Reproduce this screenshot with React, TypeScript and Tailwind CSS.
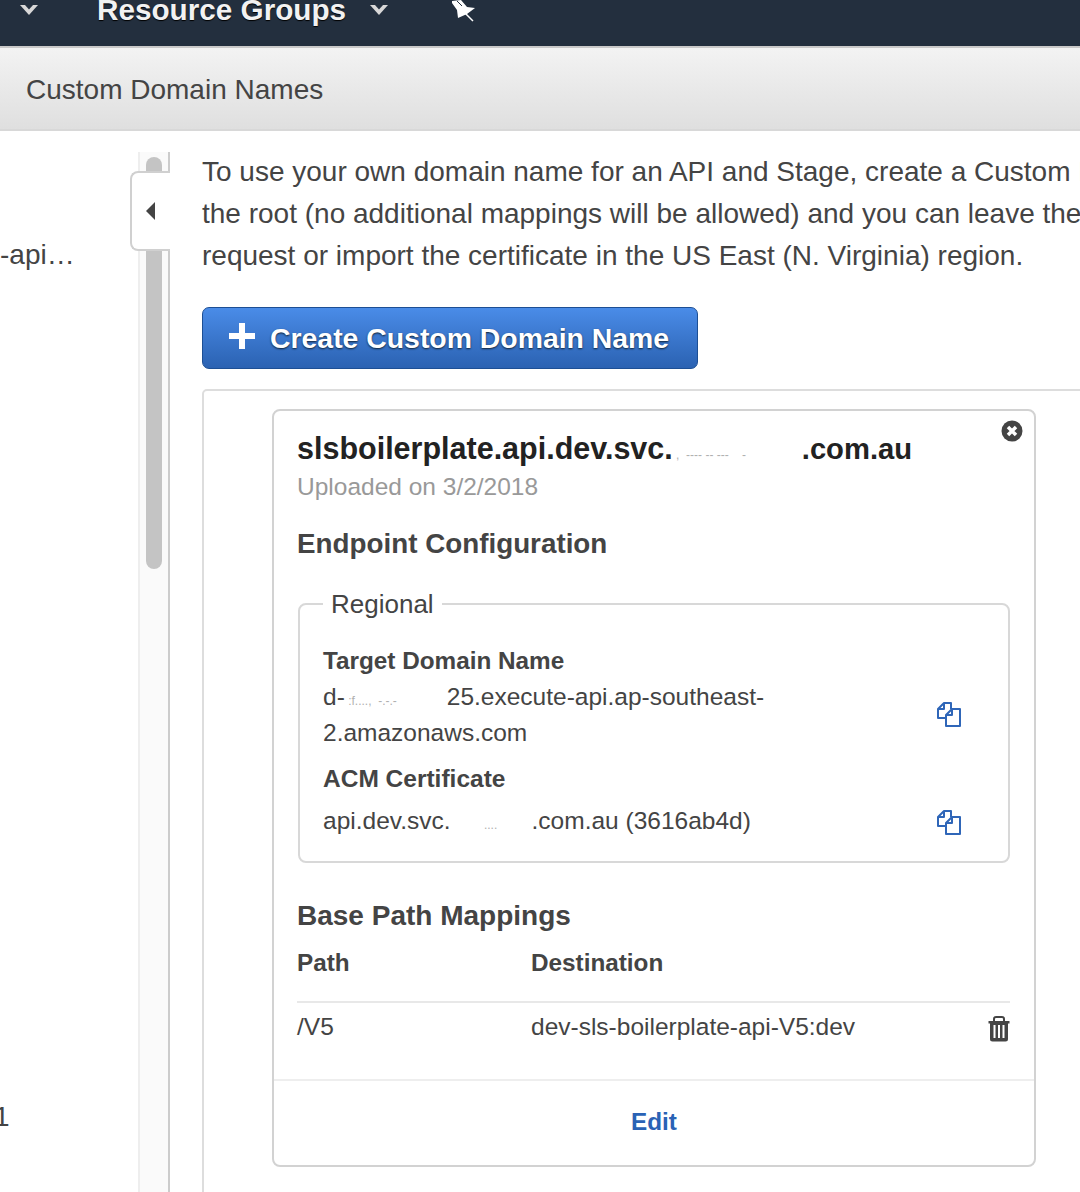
const sans = { fontFamily: '"Liberation Sans", Arial, sans-serif' };

function NavCaret() {
  return (
    <svg width="20" height="12" viewBox="0 0 20 12" className="shrink-0">
      <path d="M1 1h18l-9 10z" fill="#d8d8d8" />
      <path d="M6 1h8l-4 4.500z" fill="#232f3e" />
    </svg>
  );
}

function PinIcon() {
  return (
    <svg width="26" height="24" viewBox="0 0 26 24" className="shrink-0">
      <path d="M2 1L11 0l6 7 8 1-8 6-9 4-1-8-5-7z" fill="#fff" />
      <path d="M14 12l9 9" stroke="#fff" strokeWidth="1.500" />
      <path d="M7 1l5 5" stroke="#232f3e" strokeWidth="1" />
    </svg>
  );
}

function CopyIcon() {
  return (
    <svg width="26" height="26" viewBox="0 0 26 26" fill="none" stroke="#2f66b8" strokeWidth="2" strokeLinejoin="round" className="shrink-0">
      <path d="M9 17H2V8l6-6h7v6" />
      <path d="M2.500 8H8V2.500" />
      <path d="M10 25V14l6-6h8v17z" fill="#fff" />
      <path d="M10 14h6V8" />
    </svg>
  );
}

function TrashIcon() {
  return (
    <svg width="22" height="26" viewBox="0 0 22 26" className="shrink-0 mt-[3px]">
      <path d="M0.500 5h21v2.500h-1.500V23a2.500 2.500 0 0 1-2.500 2.500h-13A2.500 2.500 0 0 1 2 23V7.500H0.500z" fill="#444" />
      <path d="M6 5V3a2 2 0 0 1 2-2h6a2 2 0 0 1 2 2v2" fill="none" stroke="#444" strokeWidth="2" />
      <path d="M6.500 9v13M11 9v13M15.500 9v13" stroke="#fff" strokeWidth="2" />
    </svg>
  );
}

function CloseIcon() {
  return (
    <svg width="22" height="22" viewBox="0 0 22 22" className="absolute right-[11px] top-[9px]">
      <circle cx="11" cy="11" r="10.500" fill="#444" />
      <path d="M7 7l8 8M15 7l-8 8" stroke="#fff" strokeWidth="3.500" />
    </svg>
  );
}

function Redacted({ width, text }: { width: number; text: string }) {
  return (
    <span className="inline-block whitespace-pre text-[#b0b0b0] text-[12px] leading-none font-normal" style={{ width }}>
      {text}
    </span>
  );
}

export default function App() {
  return (
    <div className="w-[1080px] h-[1192px] overflow-hidden bg-white text-[#444]" style={sans}>
      <div className="h-[48px] bg-[#232f3e] border-b-2 border-[#c9c9c9] overflow-hidden">
        <div className="flex items-start h-[20px] pl-[19px]">
          <div className="mt-[4px]"><NavCaret /></div>
          <div className="ml-[58px] mt-[-5px] text-[29.700px] leading-[30px] font-bold text-[#f2f2f2] whitespace-nowrap [text-shadow:0_1px_1px_#000]">Resource Groups</div>
          <div className="ml-[23px] mt-[4px]"><NavCaret /></div>
          <div className="ml-[61px]"><PinIcon /></div>
        </div>
      </div>

      <div className="h-[83px] bg-gradient-to-b from-[#f3f3f3] to-[#dfdfdf] border-b-2 border-[#d8d8d8] pl-[26px] pt-[2px] flex items-center">
        <div className="text-[28px] leading-none whitespace-nowrap">Custom Domain Names</div>
      </div>

      <div className="flex">
        <div className="w-[138px] shrink-0 overflow-hidden text-[28px] leading-none">
          <div className="pt-[110px] whitespace-nowrap">-api…</div>
          <div className="mt-[834px] ml-[-6px]">1</div>
        </div>

        <div className="relative w-[32px] shrink-0 mt-[21px] h-[1100px] border-l-2 border-r-2 border-l-[#eeeeee] border-r-[#cccccc] bg-[#fafafa]">
          <div className="ml-[6px] mt-[5px] w-[16px] h-[412px] rounded-full bg-[#c4c4c4]"></div>
          <div className="absolute left-[-10px] top-[19px] w-[40px] h-[80px] bg-white border-2 border-r-0 border-[#d0d0d0] rounded-l-[8px] flex items-center pl-[13px]">
            <svg width="11" height="18" viewBox="0 0 11 18"><path d="M10 0v18L1 9z" fill="#444" /></svg>
          </div>
        </div>

        <div className="flex-1 min-w-0 pl-[32px] pt-[20px]">
          <div className="w-[1000px] text-[28px] leading-[42px] whitespace-nowrap">
            <div>To use your own domain name for an API and Stage, create a Custom Domain Name</div>
            <div>the root (no additional mappings will be allowed) and you can leave the API</div>
            <div>request or import the certificate in the US East (N. Virginia) region.</div>
          </div>

          <button className="mt-[30px] w-[496px] h-[62px] rounded-[7px] border border-[#1d4f94] bg-gradient-to-b from-[#4a8ce8] to-[#2b62b2] flex items-center pl-[26px] text-white text-[28.400px] font-bold [text-shadow:0_1px_2px_#123]">
            <svg width="26" height="26" viewBox="0 0 26 26" className="shrink-0 mb-[5px]"><path d="M10 0h6v10h10v6H16v10h-6V16H0v-6h10z" fill="#fff" /></svg>
            <span className="ml-[15px] whitespace-nowrap">Create Custom Domain Name</span>
          </button>

          <div className="mt-[20px] w-[1000px] h-[900px] border-2 border-[#dddddd] rounded-[5px] pl-[68px] pt-[18px]">
            <div className="relative w-[764px] h-[758px] border-2 border-[#d2d2d2] rounded-[8px]">
              <CloseIcon />
              <div className="pl-[23px] pt-[19px]">
                <div className="text-[30.500px] leading-[36px] font-bold text-[#222] whitespace-nowrap">
                  slsboilerplate.api.dev.svc.<Redacted width={129} text={" ,  ---- -- ---    - "} /><span className="text-[29.200px]">.com.au</span>
                </div>
                <div className="mt-[5px] text-[24.500px] leading-[30px] text-[#999]">Uploaded on 3/2/2018</div>
                <div className="mt-[25px] text-[27.800px] leading-[34px] font-bold">Endpoint Configuration</div>

                <fieldset className="mt-[28px] ml-[1px] w-[712px] h-[274px] border-2 border-[#d8d8d8] rounded-[8px] pl-[23px] pr-[46px]">
                  <legend className="px-[8px] text-[26px] leading-[30px]">Regional</legend>
                  <div className="mt-[24px] flex items-center justify-between">
                    <div className="w-[450px] text-[24.500px] leading-[36px]">
                      <div className="font-bold text-[24.300px]">Target Domain Name</div>
                      <div>d-<Redacted width={102} text={" :f....,  -.-.- "} />25.execute-api.ap-southeast-2.amazonaws.com</div>
                    </div>
                    <div className="mt-[34px]"><CopyIcon /></div>
                  </div>
                  <div className="mt-[10px] font-bold text-[24.500px] leading-[36px]">ACM Certificate</div>
                  <div className="mt-[6px] flex items-center justify-between text-[24.500px] leading-[36px]">
                    <div className="whitespace-nowrap">api.dev.svc.<Redacted width={81} text={"          ....  "} />.com.au (3616ab4d)</div>
                    <div className="mt-[2px]"><CopyIcon /></div>
                  </div>
                </fieldset>

                <div className="mt-[36px] text-[28px] leading-[34px] font-bold">Base Path Mappings</div>
                <div className="mt-[14px] flex font-bold text-[24.300px] leading-[32px] border-b-2 border-[#e8e8e8] w-[713px] h-[56px]">
                  <div className="w-[234px]">Path</div>
                  <div>Destination</div>
                </div>
                <div className="flex items-center w-[713px] mt-[6px] text-[24.500px] leading-[36px]">
                  <div className="w-[234px]">/V5</div>
                  <div className="flex-1">dev-sls-boilerplate-api-V5:dev</div>
                  <TrashIcon />
                </div>
              </div>
              <div className="absolute left-0 right-0 bottom-0 h-[86px] border-t-2 border-[#eeeeee] pb-[2px] flex items-center justify-center text-[24.300px] font-bold text-[#2a62b5]">Edit</div>
            </div>
          </div>
        </div>
      </div>
    </div>
  );
}
